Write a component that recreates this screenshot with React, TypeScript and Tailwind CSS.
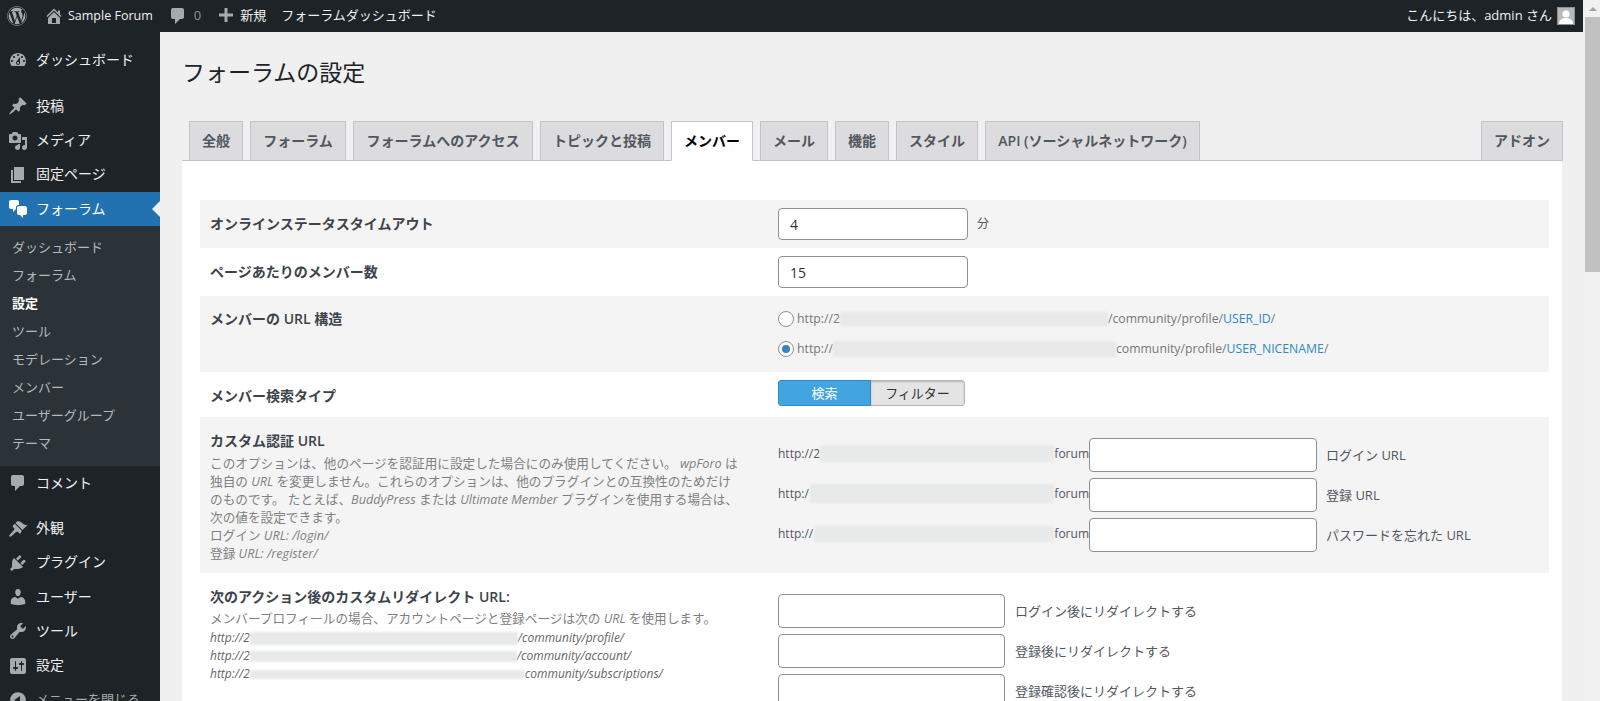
import type { ReactNode } from 'react';
import { FaWordpress } from 'react-icons/fa';

const font = '[font-family:"Open_Sans","Noto_Sans_CJK_JP",sans-serif]';

// dashicons, 20x20 grid
const icons = {
    dashboard: 'M3.76 16h12.48c1.1-1.37 1.76-3.11 1.76-5 0-4.42-3.58-8-8-8s-8 3.58-8 8c0 1.89.66 3.63 1.76 5zM10 4c.55 0 1 .45 1 1s-.45 1-1 1-1-.45-1-1 .45-1 1-1zM6 6c.55 0 1 .45 1 1s-.45 1-1 1-1-.45-1-1 .45-1 1-1zm8 0c.55 0 1 .45 1 1s-.45 1-1 1-1-.45-1-1 .45-1 1-1zm-5.37 5.55L12 7v6c0 1.1-.9 2-2 2s-2-.9-2-2c0-.57.24-1.08.63-1.45zM4 10c.55 0 1 .45 1 1s-.45 1-1 1-1-.45-1-1 .45-1 1-1zm12 0c.55 0 1 .45 1 1s-.45 1-1 1-1-.45-1-1 .45-1 1-1zm-5 3c0-.55-.45-1-1-1s-1 .45-1 1 .45 1 1 1 1-.45 1-1z',
    post: 'M10.44 3.02l1.82-1.82 6.36 6.35-1.83 1.82c-1.05-.68-2.48-.57-3.41.36l-.75.75c-.92.93-1.04 2.35-.35 3.41l-1.83 1.82-2.41-2.41-2.8 2.79c-.42.42-3.38 2.71-3.8 2.29s1.86-3.39 2.28-3.81l2.79-2.79L4.1 9.36l1.83-1.82c1.05.69 2.48.57 3.4-.36l.75-.75c.93-.92 1.05-2.35.36-3.41z',
    media: 'M13 11V4c0-.55-.45-1-1-1h-1.67L9 1H5L3.67 3H2c-.55 0-1 .45-1 1v7c0 .55.45 1 1 1h10c.55 0 1-.45 1-1zM7 4.5c1.38 0 2.5 1.12 2.5 2.5S8.38 9.5 7 9.5 4.5 8.38 4.5 7 5.62 4.5 7 4.5zM14 6h5v10.5c0 1.38-1.12 2.5-2.5 2.5S14 17.88 14 16.5s1.12-2.5 2.5-2.5c.17 0 .34.02.5.05V9h-3V6zm-4 8.05V13h2v3.5c0 1.38-1.12 2.5-2.5 2.5S7 17.88 7 16.5 8.12 14 9.500 14c.17 0 .34.02.5.05z',
    page: 'M6 15V2h10v13H6zm-1 1h8v2H3V5h2v11z',
    chat: 'M11 6h-.82C9.07 6 8 7.2 8 8.16V10l-3 3v-3H3c-1.1 0-2-.9-2-2V3c0-1.1.9-2 2-2h6c1.1 0 2 .9 2 2v3zm0 1h6c1.1 0 2 .9 2 2v5c0 1.1-.9 2-2 2h-2v3l-3-3h-1c-1.1 0-2-.9-2-2V9c0-1.1.9-2 2-2z',
    comment: 'M5 2h9c1.1 0 2 .9 2 2v7c0 1.1-.9 2-2 2h-2l-5 5v-5H5c-1.1 0-2-.9-2-2V4c0-1.1.9-2 2-2z',
    appearance: 'M14.48 11.06L7.41 3.99l1.5-1.5c.5-.56 2.3-.47 3.51.32 1.21.8 1.43 1.28 2.91 2.1 1.18.64 2.45 1.26 4.45.85zm-.71.71L6.7 4.7 4.93 6.47c-.39.39-.39 1.02 0 1.41l1.06 1.06c.59.7.59 1.45 0 2.06L2 15.5c-.84.84-.84 1.66-.46 2.04.4.4 1.23.4 2.05-.43l4.500-4c.6-.59 1.36-.59 2.07 0l1.06 1.06c.39.39 1.02.39 1.41 0z',
    plugins: 'M13.11 4.36L9.87 7.6 8 5.73l3.24-3.24c.35-.34 1.05-.2 1.56.32.52.51.66 1.21.31 1.55zm-8 1.77l.91-1.12 9.01 9.01-1.19.84c-.71.71-2.63 1.16-3.82 1.16H6.14L4.9 17.26c-.59.59-1.54.59-2.12 0-.59-.58-.59-1.53 0-2.12l1.24-1.24v-3.88c0-1.13.4-3.19 1.09-3.89zm7.26 3.97l3.24-3.24c.34-.35 1.04-.21 1.55.31.52.51.66 1.21.31 1.55l-3.24 3.25z',
    users: 'M10 9.25c-2.27 0-2.73-3.44-2.73-3.44C7 4.02 7.82 2 9.97 2c2.16 0 2.98 2.02 2.71 3.81 0 0-.41 3.44-2.68 3.44zm0 2.57L12.72 10c2.39 0 4.52 2.33 4.52 4.53v2.49s-3.65 1.13-7.24 1.13c-3.65 0-7.24-1.13-7.24-1.13v-2.49c0-2.25 1.94-4.48 4.47-4.48z',
    tools: 'M16.68 9.77c-1.34 1.34-3.3 1.67-4.95.99l-5.41 6.52c-.99.99-2.59.99-3.58 0s-.99-2.59 0-3.57l6.52-5.42c-.68-1.65-.35-3.61.99-4.95 1.28-1.28 3.12-1.62 4.72-1.06l-2.89 2.89 2.82 2.82 2.86-2.87c.53 1.58.18 3.39-1.08 4.65zM3.81 16.21c.4.39 1.04.39 1.43 0 .4-.4.4-1.04 0-1.43-.39-.4-1.03-.4-1.43 0-.39.39-.39 1.03 0 1.43z',
    settings: 'M18 16V4c0-1.1-.9-2-2-2H4c-1.1 0-2 .9-2 2v12c0 1.1.9 2 2 2h12c1.1 0 2-.9 2-2zM8 11h1c.55 0 1 .45 1 1s-.45 1-1 1H8v1.5c0 .28-.22.5-.5.5s-.5-.22-.5-.5V13H6c-.55 0-1-.45-1-1s.45-1 1-1h1V5.500c0-.28.22-.5.5-.5s.5.22.5.5V11zm5-2h-1c-.55 0-1-.45-1-1s.45-1 1-1h1V5.500c0-.28.22-.5.5-.5s.5.22.5.5V7h1c.55 0 1 .45 1 1s-.45 1-1 1h-1v5.500c0 .28-.22.5-.5.5s-.5-.22-.5-.5V9z',
    collapse: 'M10 2.16c4.33 0 7.84 3.51 7.84 7.84s-3.51 7.84-7.84 7.84S2.16 14.33 2.16 10 5.71 2.160 10 2.16zm2 11.72V6.120L6.180 9.970z',
    home: 'M16 8.5l1.53 1.53-1.06 1.06L10 4.62l-6.47 6.47-1.06-1.06L10 2.5l4 4v-2h2v4zm-6-2.46l6 5.99V18H4v-5.970zM12 17v-5H8v5h4z',
    plus: 'M17 7.500v3h-5.500V16h-3v-5.500H3v-3h5.500V2h3v5.500H17z',
};

function Dash({ d, className }: { d: string; className: string }) {
    return (
        <svg viewBox="0 0 20 20" className={className} fill="currentColor" fillRule="evenodd">
            <path d={d} />
        </svg>
    );
}

function MenuItem({ icon, label, active }: { icon: string; label: string; active?: boolean }) {
    return (
        <div className={`relative flex h-[34.25px] items-center text-sm ${active ? 'bg-[#2271b1] text-white' : 'text-[#f0f0f1]'}`}>
            <Dash d={icon} className={`ml-2 mr-2 h-5 w-5 ${active ? 'text-white' : 'text-[#a7aaad]'}`} />
            <span className="-mt-px">{label}</span>
            {active && <span className="absolute right-0 top-[9px] h-0 w-0 border-y-[8px] border-r-[8px] border-y-transparent border-r-[#f0f0f1]" />}
        </div>
    );
}

function Sidebar() {
    const sub = ['ダッシュボード', 'フォーラム', '設定', 'ツール', 'モデレーション', 'メンバー', 'ユーザーグループ', 'テーマ'];
    return (
        <aside className="h-full w-40 shrink-0 bg-[#1d2327]">
            <div className="h-[11px]" />
            <MenuItem icon={icons.dashboard} label="ダッシュボード" />
            <div className="h-3" />
            <MenuItem icon={icons.post} label="投稿" />
            <MenuItem icon={icons.media} label="メディア" />
            <MenuItem icon={icons.page} label="固定ページ" />
            <MenuItem icon={icons.chat} label="フォーラム" active />
            <ul className="bg-[#2c3338] pb-[9px] pt-[7px] text-[13px] text-[#b4b9be]">
                {sub.map((s) => (
                    <li key={s} className={`flex h-7 items-center pl-3 ${s === '設定' ? 'font-semibold text-white' : ''}`}>{s}</li>
                ))}
            </ul>
            <MenuItem icon={icons.comment} label="コメント" />
            <div className="h-[11px]" />
            <MenuItem icon={icons.appearance} label="外観" />
            <MenuItem icon={icons.plugins} label="プラグイン" />
            <MenuItem icon={icons.users} label="ユーザー" />
            <MenuItem icon={icons.tools} label="ツール" />
            <MenuItem icon={icons.settings} label="設定" />
            <div className="flex h-[34px] items-center text-[13px] text-[#a7aaad]">
                <Dash d={icons.collapse} className="ml-2 mr-2 h-5 w-5" />
                <span>メニューを閉じる</span>
            </div>
        </aside>
    );
}

function TopBar() {
    return (
        <header className="flex h-8 shrink-0 items-center bg-[#1d2327] pl-[7px] pr-2 text-[13px] text-[#f0f0f1]">
            <FaWordpress className="h-5 w-5 text-[#a7aaad]" />
            <Dash d={icons.home} className="ml-[17px] h-5 w-5 text-[#a7aaad]" />
            <span className="ml-1 text-[12.5px]">Sample Forum</span>
            <Dash d={icons.comment} className="ml-[15px] h-5 w-5 text-[#a7aaad]" />
            <span className="ml-[6px] text-[#8c8f94]">0</span>
            <Dash d={icons.plus} className="ml-[15px] h-5 w-5 text-[#a7aaad]" />
            <span className="ml-1">新規</span>
            <span className="ml-[15px]">フォーラムダッシュボード</span>
            <span className="ml-auto">こんにちは、admin さん</span>
            <span className="ml-[5px] flex h-[18px] w-[18px] items-end justify-center overflow-hidden border border-[#8c8f94] bg-[#b8b8b8]">
                <svg viewBox="0 0 16 16" className="h-4 w-4 text-white" fill="currentColor">
                    <circle cx="8" cy="6" r="3.6" />
                    <path d="M1 16c0-4 3-6 7-6s7 2 7 6z" />
                </svg>
            </span>
        </header>
    );
}

function Tab({ label, active, className }: { label: string; active?: boolean; className: string }) {
    return (
        <div
            className={`-mb-px flex h-10 items-center justify-center whitespace-nowrap border border-[#c3c4c7] text-sm font-semibold ${
                active ? 'z-10 border-b-white bg-white text-black' : 'bg-[#dcdcde] text-[#50575e]'
            } ${className}`}
        >
            {label}
        </div>
    );
}

function Blur({ className }: { className: string }) {
    return <span className={`inline-block bg-[#e8e9e9] align-middle blur-[1px] ${className}`} />;
}

function Input({ className, value = '' }: { className: string; value?: string }) {
    return (
        <input
            readOnly
            value={value}
            className={`rounded border border-[#8c8f94] bg-white px-[11px] text-sm text-[#2c3338] ${className}`}
        />
    );
}

function Radio({ checked, children }: { checked?: boolean; children: ReactNode }) {
    return (
        <div className="flex h-[30px] items-center whitespace-nowrap text-[12.25px] text-[#777]">
            <span className="mr-[3px] flex h-4 w-4 items-center justify-center rounded-full border border-[#8c8f94] bg-white">
                {checked && <span className="h-2 w-2 rounded-full bg-[#3582c4]" />}
            </span>
            {children}
        </div>
    );
}

function Row({ label, tint, className, children }: { label: ReactNode; tint?: boolean; className: string; children: ReactNode }) {
    return (
        <div className={`flex ${tint ? 'bg-[#f4f4f4]' : ''} ${className}`}>
            <div className="w-[578px] shrink-0 pl-[10px] text-[#3c434a]">{label}</div>
            <div className="min-w-0 flex-1">{children}</div>
        </div>
    );
}

function AuthUrl({ prefix, blur, label }: { prefix: string; blur: string; label: string }) {
    return (
        <div className="flex h-[34px] items-center whitespace-nowrap text-[13px] text-[#50575e]">
            <span className="flex w-[311px] items-center pb-[3px] text-xs">
                <span className="shrink-0">{prefix}</span>
                <span className="ml-auto flex items-center"><Blur className={blur} /><span>forum</span></span>
            </span>
            <Input className="h-[34px] w-[228px]" />
            <span className="ml-[9px]">{label}</span>
        </div>
    );
}

function RedirectUrl({ label }: { label: string }) {
    return (
        <div className="flex h-[34px] items-center whitespace-nowrap text-[13px] text-[#50575e]">
            <Input className="h-[34px] w-[227px]" />
            <span className="ml-[10px]">{label}</span>
        </div>
    );
}

export default function App() {
    return (
        <div className={`flex h-[701px] w-full overflow-hidden bg-[#f0f0f1] ${font}`}>
            <div className="flex min-w-0 flex-1 flex-col">
                <TopBar />
                <div className="flex min-h-0 flex-1">
                    <Sidebar />
                    <main className="min-w-0 flex-1">
                        <h1 className="ml-[22px] mt-6 h-8 text-[23px] leading-8 text-[#1d2327]">フォーラムの設定</h1>
                        <div className="ml-[29px] mr-5 mt-[33px] flex gap-[7px]">
                            <Tab label="全般" className="w-[54px]" />
                            <Tab label="フォーラム" className="w-[96px]" />
                            <Tab label="フォーラムへのアクセス" className="w-[180px]" />
                            <Tab label="トピックと投稿" className="w-[124px]" />
                            <Tab label="メンバー" active className="w-[82px]" />
                            <Tab label="メール" className="w-[68px]" />
                            <Tab label="機能" className="w-[54px]" />
                            <Tab label="スタイル" className="w-[82px]" />
                            <Tab label="API (ソーシャルネットワーク)" className="w-[215px]" />
                            <Tab label="アドオン" className="ml-auto w-[82px]" />
                        </div>
                        <div className="ml-[22px] mr-[21px] border-t border-[#c3c4c7] bg-white pl-[18px] pr-[13px] pt-[39px] text-sm">
                            <Row tint className="h-12 items-center" label={<span className="font-semibold">オンラインステータスタイムアウト</span>}>
                                <div className="flex items-center">
                                    <Input className="h-8 w-[190px]" value="4" />
                                    <span className="ml-[9px] text-xs text-[#50575e]">分</span>
                                </div>
                            </Row>
                            <Row className="h-12 items-center" label={<span className="font-semibold">ページあたりのメンバー数</span>}>
                                <Input className="h-8 w-[190px]" value="15" />
                            </Row>
                            <Row tint className="h-[76px] pt-2" label={<span className="block pt-[5px] font-semibold">メンバーの URL 構造</span>}>
                                <Radio>
                                    http://2<Blur className="h-[14px] w-[268px]" />/community/profile/<span className="text-[#2b8ac0]">USER_ID</span>/
                                </Radio>
                                <Radio checked>
                                    http://<Blur className="h-4 w-[283px]" />community/profile/<span className="text-[#2b8ac0]">USER_NICENAME</span>/
                                </Radio>
                            </Row>
                            <Row className="h-[45px] pt-2" label={<span className="block pt-[6px] font-semibold">メンバー検索タイプ</span>}>
                                <div className="flex h-[26px] w-[187px] overflow-hidden rounded text-[13px]">
                                    <span className="flex w-[93px] items-center justify-center border border-[#2d8ac7] bg-[#42a5e0] text-white">検索</span>
                                    <span className="flex flex-1 items-center justify-center border border-l-0 border-[#b5b5b5] bg-[#e4e4e4] text-[#333] shadow-[inset_0_1px_2px_rgba(0,0,0,0.2)]">フィルター</span>
                                </div>
                            </Row>
                            <Row
                                tint
                                className="h-[156px] pt-[14px]"
                                label={
                                    <>
                                        <div className="h-5 font-semibold leading-5">カスタム認証 URL</div>
                                        <p className="mt-[3px] whitespace-nowrap text-[12.65px] leading-[18px] text-[#808080]">
                                            このオプションは、他のページを認証用に設定した場合にのみ使用してください。 <i>wpForo</i> は<br />
                                            独自の <i>URL</i> を変更しません。これらのオプションは、他のプラグインとの互換性のためだけ<br />
                                            のものです。 たとえば、<i>BuddyPress</i> または <i>Ultimate Member</i> プラグインを使用する場合は、<br />
                                            次の値を設定できます。<br />
                                            ログイン <i>URL: /login/</i><br />
                                            登録 <i>URL: /register/</i>
                                        </p>
                                    </>
                                }
                            >
                                <div className="mt-[7px] flex flex-col gap-[6px]">
                                    <AuthUrl prefix="http://2" blur="w-[234px] h-[17px]" label="ログイン URL" />
                                    <AuthUrl prefix="http:/" blur="w-[244px] h-[19px]" label="登録 URL" />
                                    <AuthUrl prefix="http://" blur="w-[240px] h-4" label="パスワードを忘れた URL" />
                                </div>
                            </Row>
                            <Row
                                className="h-[200px] pt-[14px]"
                                label={
                                    <>
                                        <div className="h-5 font-semibold leading-5">次のアクション後のカスタムリダイレクト URL:</div>
                                        <p className="mt-[2px] h-[18px] whitespace-nowrap text-[12.65px] leading-[18px] text-[#808080]">
                                            メンバープロフィールの場合、アカウントページと登録ページは次の <i>URL</i> を使用します。
                                        </p>
                                        <div className="mt-[2px] whitespace-nowrap text-xs italic leading-[18px] text-[#666]">
                                            <div>http://2<Blur className="h-[13px] w-[268px]" />/community/profile/</div>
                                            <div>http://2<Blur className="h-[11px] w-[267px]" />/community/account/</div>
                                            <div>http://2<Blur className="h-[9px] w-[275px]" />community/subscriptions/</div>
                                        </div>
                                    </>
                                }
                            >
                                <div className="mt-[7px] flex flex-col gap-[6px]">
                                    <RedirectUrl label="ログイン後にリダイレクトする" />
                                    <RedirectUrl label="登録後にリダイレクトする" />
                                    <RedirectUrl label="登録確認後にリダイレクトする" />
                                </div>
                            </Row>
                        </div>
                    </main>
                </div>
            </div>
            {/* window scrollbar */}
            <div className="flex w-[17px] shrink-0 flex-col items-end bg-[#f1f1f1]">
                <div className="flex h-[17px] w-[15px] items-center justify-center">
                    <span className="h-0 w-0 border-x-[4px] border-b-[4px] border-x-transparent border-b-[#a3a3a3]" />
                </div>
                <div className="h-[255px] w-[15px] bg-[#c1c1c1]" />
            </div>
        </div>
    );
}
